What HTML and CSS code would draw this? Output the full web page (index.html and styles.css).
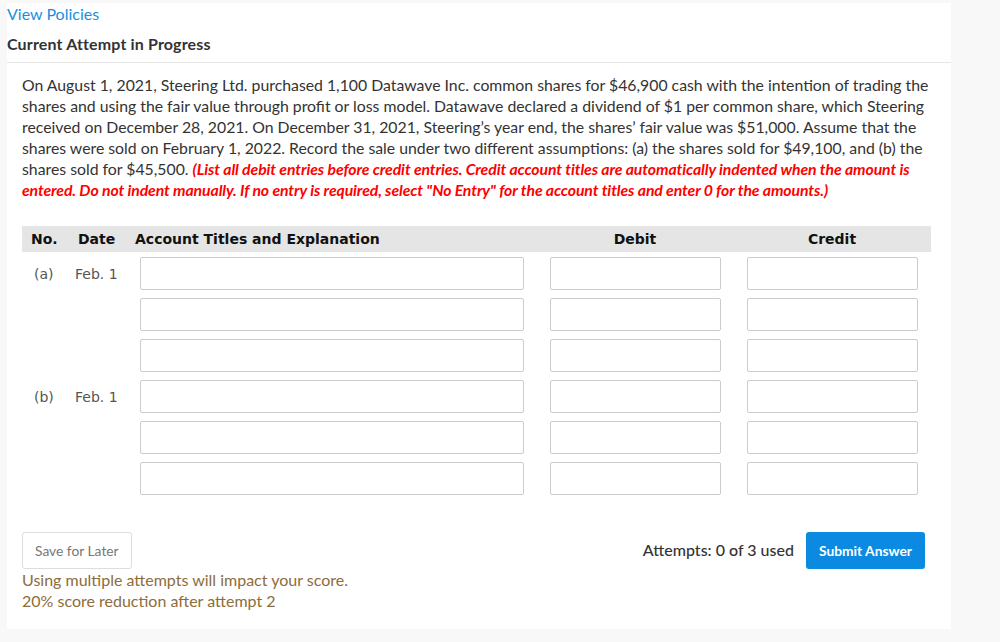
FILE: index.html
```html
<!DOCTYPE html>
<html lang="en">
<head>
    <meta charset="UTF-8">
    <title>Current Attempt in Progress</title>
    <link rel="stylesheet" href="styles.css">
</head>
<body>
    <div class="panel">
        <a class="policies" href="#">View Policies</a>
        <h4 class="attempt-title">Current Attempt in Progress</h4>

        <div class="question">
            <p class="prompt">On August 1, 2021, Steering Ltd. purchased 1,100 Datawave Inc. common shares for $46,900 cash with the intention of trading the shares and using the fair value through profit or loss model. Datawave declared a dividend of $1 per common share, which Steering received on December 28, 2021. On December 31, 2021, Steering’s year end, the shares’ fair value was $51,000. Assume that the shares were sold on February 1, 2022. Record the sale under two different assumptions: (a) the shares sold for $49,100, and (b) the shares sold for $45,500. <em class="note">(List all debit entries before credit entries. Credit account titles are automatically indented when the amount is entered. Do not indent manually. If no entry is required, select "No Entry" for the account titles and enter 0 for the amounts.)</em></p>

            <div class="journal">
                <div class="jhead">
                    <div class="h-no">No.</div>
                    <div class="h-date">Date</div>
                    <div class="h-acct">Account Titles and Explanation</div>
                    <div class="h-amt">Debit</div>
                    <div class="h-amt">Credit</div>
                </div>

                <div class="jrow">
                    <div class="c-no">(a)</div>
                    <div class="c-date">Feb. 1</div>
                    <div class="c-acct"><input class="field acct" type="text"></div>
                    <div class="c-amt"><input class="field amt" type="text"></div>
                    <div class="c-amt"><input class="field amt" type="text"></div>
                </div>
                <div class="jrow">
                    <div class="c-no"></div>
                    <div class="c-date"></div>
                    <div class="c-acct"><input class="field acct" type="text"></div>
                    <div class="c-amt"><input class="field amt" type="text"></div>
                    <div class="c-amt"><input class="field amt" type="text"></div>
                </div>
                <div class="jrow">
                    <div class="c-no"></div>
                    <div class="c-date"></div>
                    <div class="c-acct"><input class="field acct" type="text"></div>
                    <div class="c-amt"><input class="field amt" type="text"></div>
                    <div class="c-amt"><input class="field amt" type="text"></div>
                </div>

                <div class="jrow">
                    <div class="c-no">(b)</div>
                    <div class="c-date">Feb. 1</div>
                    <div class="c-acct"><input class="field acct" type="text"></div>
                    <div class="c-amt"><input class="field amt" type="text"></div>
                    <div class="c-amt"><input class="field amt" type="text"></div>
                </div>
                <div class="jrow">
                    <div class="c-no"></div>
                    <div class="c-date"></div>
                    <div class="c-acct"><input class="field acct" type="text"></div>
                    <div class="c-amt"><input class="field amt" type="text"></div>
                    <div class="c-amt"><input class="field amt" type="text"></div>
                </div>
                <div class="jrow">
                    <div class="c-no"></div>
                    <div class="c-date"></div>
                    <div class="c-acct"><input class="field acct" type="text"></div>
                    <div class="c-amt"><input class="field amt" type="text"></div>
                    <div class="c-amt"><input class="field amt" type="text"></div>
                </div>
            </div>

            <div class="actions">
                <button class="btn-save">Save for Later</button>
                <div class="submit-group">
                    <span class="attempts">Attempts: 0 of 3 used</span>
                    <button class="btn-submit">Submit Answer</button>
                </div>
            </div>
            <p class="penalty">Using multiple attempts will impact your score.<br>20% score reduction after attempt 2</p>
        </div>
    </div>
</body>
</html>
```

FILE: styles.css
```css
body { margin: 0; background: #f8f8f8; font-family: Lato, "Open Sans", sans-serif; color: #333; }
.panel { width: 944px; margin: 3px 0 0 7px; background: #fff; padding-bottom: 18px; }

.policies { display: block; font-size: 16px; line-height: 22px; color: #1a8fe0; text-decoration: none; }
.attempt-title { margin: 0; padding: 8px 0 7px; font-size: 16px; line-height: 22px; font-weight: 700; letter-spacing: 0.15px; color: #333; border-bottom: 1px solid #e6e6e6; }

.question { padding: 0 15px 0 15px; }
.prompt { margin: 11px 0 0; font-size: 15.8px; line-height: 21px; color: #333; }
.note { color: #f00; font-weight: 700; letter-spacing: -0.1px; }

.journal { margin-top: 26px; width: 909px; }
.jhead, .jrow { display: grid; grid-template-columns: 50px 62px 403px 196px 198px; align-items: center; }
.jhead { background: #e5e5e5; height: 26px; font-family: "DejaVu Sans", sans-serif; font-weight: 700; font-size: 14px; color: #111; }
.h-no { padding-left: 9px; }
.h-date { padding-left: 6px; }
.h-acct { padding-left: 1px; }
.h-amt { text-align: center; }

.jrow { height: 33px; margin-top: 8px; font-family: "DejaVu Sans", sans-serif; font-size: 14px; color: #555; }
.jhead + .jrow { margin-top: 5px; }
.c-no { padding-left: 12px; }
.c-date { padding-left: 3px; }
.c-acct { padding-left: 6px; }
.c-amt { text-align: center; }

.field { box-sizing: border-box; height: 33px; border: 1px solid #ccc; border-radius: 2px; background: #fff; font: inherit; display: block; }
.acct { width: 384px; }
.amt { width: 171px; margin: 0 auto; }

.actions { display: flex; justify-content: space-between; align-items: center; margin-top: 37px; width: 903px; }
.btn-save { height: 37px; padding: 0 12px; background: #fff; border: 1px solid #ddd; border-radius: 3px; font-family: Lato, sans-serif; font-size: 13.8px; color: #777; }
.submit-group { display: flex; align-items: center; gap: 12px; }
.attempts { font-size: 16px; color: #333; font-weight: 500; margin-top: -3px; }
.btn-submit { height: 37px; padding: 0 13px; background: #0a8ae0; border: none; border-radius: 3px; font-family: Lato, sans-serif; font-size: 13.8px; font-weight: 700; color: #fff; }

.penalty { margin: 0; font-size: 16px; line-height: 21px; color: #8c6d3b; }
```
